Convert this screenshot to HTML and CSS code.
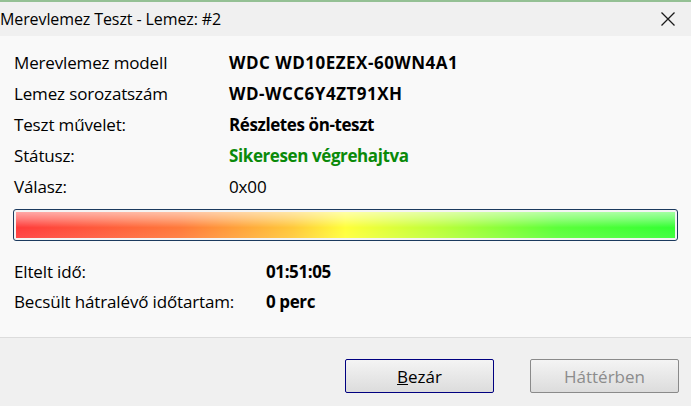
FILE: index.html
```html
<!DOCTYPE html>
<html lang="hu">
<head>
    <meta charset="UTF-8">
    <title>Merevlemez Teszt</title>
    <link rel="stylesheet" href="styles.css">
</head>
<body>
    <div class="window">
        <div class="title-bar">
            <span class="title">Merevlemez Teszt - Lemez: #2</span>
            <svg class="close" width="16" height="16" viewBox="0 0 16 16">
                <path d="M1.5 1.5 L14.5 14.5 M14.5 1.5 L1.5 14.5" stroke="#1a1a1a" stroke-width="1.3" fill="none"/>
            </svg>
        </div>
        <div class="content">
            <div class="info">
                <span class="label">Merevlemez modell</span>
                <span class="value bold caps">WDC WD10EZEX-60WN4A1</span>
                <span class="label">Lemez sorozatszám</span>
                <span class="value bold caps">WD-WCC6Y4ZT91XH</span>
                <span class="label">Teszt művelet:</span>
                <span class="value bold">Részletes ön-teszt</span>
                <span class="label">Státusz:</span>
                <span class="value bold ok">Sikeresen végrehajtva</span>
                <span class="label">Válasz:</span>
                <span class="value">0x00</span>
            </div>
            <div class="progress">
                <div class="progress-fill"></div>
            </div>
            <div class="times">
                <span class="label">Eltelt idő:</span>
                <span class="value bold">01:51:05</span>
                <span class="label">Becsült hátralévő időtartam:</span>
                <span class="value bold">0 perc</span>
            </div>
        </div>
        <div class="footer">
            <button class="btn default"><u>B</u>ezár</button>
            <button class="btn" disabled>Háttérben</button>
        </div>
    </div>
</body>
</html>
```

FILE: styles.css
```css
*{
    margin: 0;
    padding: 0;
    box-sizing: border-box;
}
body{
    width: 691px;
    height: 406px;
    overflow: hidden;
    font-family: "Open Sans", "Noto Sans", sans-serif;
    color: #000;
    background: #f0f0f0;
}
.window{
    height: 406px;
    display: flex;
    flex-direction: column;
    border-top: 2px solid #94c094;
}
.title-bar{
    height: 34px;
    display: flex;
    align-items: center;
    justify-content: space-between;
    background: #f0f0f0;
    padding: 0 15px 0 0;
}
.title{
    font-size: 16px;
    letter-spacing: -0.1px;
    color: #000;
}
.content{
    flex: 1;
    background: #f9f9f9;
    border-bottom: 1px solid #dcdcdc;
    padding: 11px 13px 0 13px;
}
.info{
    display: grid;
    grid-template-columns: 215px 1fr;
    grid-auto-rows: 31px;
    align-items: center;
    padding-left: 1px;
}
.label, .value{
    font-size: 17px;
    letter-spacing: -0.15px;
    line-height: 22px;
}
.bold{
    font-weight: 700;
    letter-spacing: -0.4px;
}
.bold.caps{
    letter-spacing: 0.5px;
}
.ok{
    color: #0a8a0a;
}
.progress{
    margin-top: 7px;
    height: 32px;
    border: 1px solid #1c3a5e;
    border-radius: 3px;
    padding: 2px;
    background: #f4f4f4;
}
.progress-fill{
    height: 100%;
    background:
        linear-gradient(to bottom, rgba(255,255,255,0.55) 0%, rgba(255,255,255,0.35) 25%, rgba(255,255,255,0) 60%, rgba(255,255,255,0.08) 100%),
        linear-gradient(to right, #ff3b3b 0%, #ff7a3a 25%, #ffc93a 42%, #ffff3a 50%, #b8ff3a 65%, #5cff3a 82%, #33ff33 100%);
}
.times{
    display: grid;
    grid-template-columns: 252px 1fr;
    grid-auto-rows: 30px;
    align-items: center;
    margin-top: 16px;
    padding-left: 1px;
}
.footer{
    height: 68px;
    display: flex;
    justify-content: flex-end;
    align-items: flex-start;
    gap: 36px;
    padding: 21px 12px 0 0;
}
.btn{
    width: 149px;
    height: 34px;
    font-family: "Open Sans", "Noto Sans", sans-serif;
    font-size: 17px;
    color: #000;
    border: 1px solid #000080;
    border-radius: 2px;
    background: linear-gradient(to bottom, #f4f4f4, #dcdcdc);
}
.btn:disabled{
    color: #8c8c8c;
    border-color: #8a8a8a;
}
```
